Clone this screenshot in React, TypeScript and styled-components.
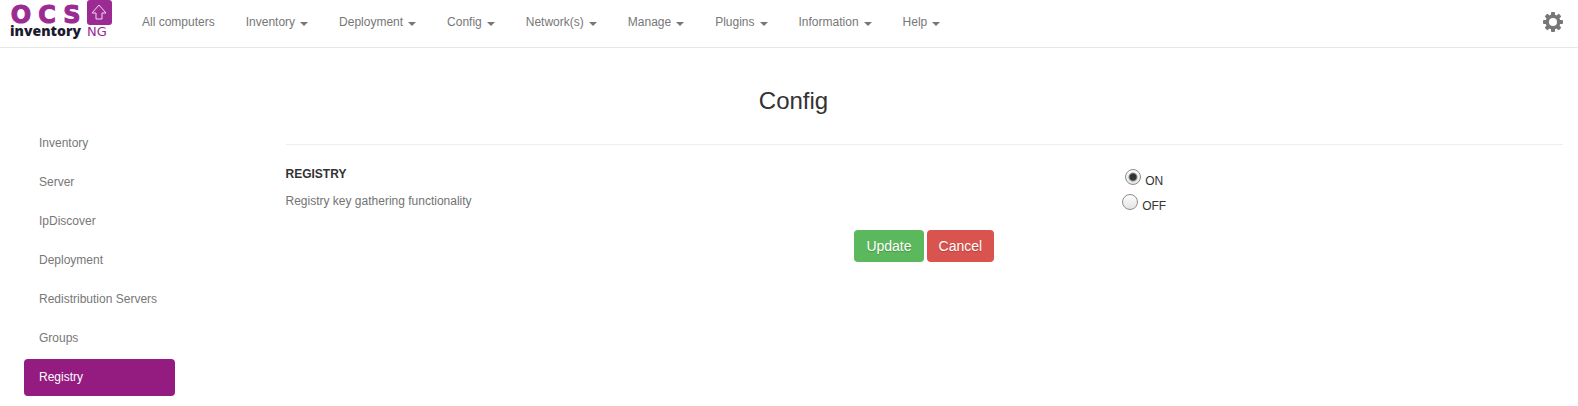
import React, { useState } from 'react';
import styled, { createGlobalStyle } from 'styled-components';

const GlobalStyle = createGlobalStyle`
  *, *::before, *::after { box-sizing: border-box; }
  body {
    margin: 0;
    background: #fff;
    color: #333;
    font: 12px/17px "Liberation Sans", Arial, sans-serif;
  }
`;

const Navbar = styled.header`
  display: flex;
  align-items: flex-start;
  justify-content: space-between;
  height: 48px;
  padding: 0 15px 0 9px;
  border-bottom: 1px solid #e7e7e7;
`;

const NavStart = styled.div`
  display: flex;
`;

const Brand = styled.a`
  display: block;
  width: 118px;
  height: 40px;
`;

const NavList = styled.ul`
  display: flex;
  gap: 1px;
  margin: 0;
  padding: 0;
  list-style: none;
`;

const NavLink = styled.a`
  display: flex;
  align-items: center;
  gap: 5px;
  padding: 14px 15px;
  color: #777;
  text-decoration: none;
`;

const Caret = styled.span`
  border: 4px solid transparent;
  border-top-color: #777;
  border-bottom: 0;
  margin-top: 2px;
`;

const SettingsButton = styled.button`
  display: block;
  padding: 12px 0 0;
  border: 0;
  background: none;
  color: #777;
  cursor: pointer;

  svg { display: block; }
`;

const Page = styled.main`
  padding: 0 15px 0 24px;
`;

const Title = styled.h1`
  margin: 39px 0 0;
  font-size: 24px;
  font-weight: 400;
  line-height: 28px;
  text-align: center;
`;

const Columns = styled.div`
  display: grid;
  grid-template-columns: 1fr 5fr;
  margin: 10px -15px 0;

  > * { margin: 0 15px; }
`;

const SideMenu = styled.ul`
  display: flex;
  flex-direction: column;
  gap: 2px;
  width: 151px;
  margin: 0;
  padding: 0;
  list-style: none;
`;

const SideLink = styled.a<{ $active?: boolean }>`
  display: block;
  padding: 10px 15px;
  border-radius: 4px;
  background: ${p => (p.$active ? '#941b80' : 'transparent')};
  color: ${p => (p.$active ? '#fff' : '#777')};
  text-decoration: none;
`;

const Form = styled.form`
  padding-top: 19px;
`;

const Divider = styled.hr`
  margin: 0 0 21px;
  border: 0;
  border-top: 1px solid #eee;
`;

const Setting = styled.div`
  display: grid;
  grid-template-columns: 1fr 2fr;
  margin: 0 -15px;

  > * { margin: 0 15px; }
`;

const SettingName = styled.h2`
  margin: 0;
  font-size: 12px;
  line-height: 17px;
`;

const SettingHelp = styled.p`
  margin: 10px 0 0;
  color: #737373;
`;

const Options = styled.div`
  display: flex;
  flex-direction: column;
  align-items: center;
  gap: 1px;
  padding-top: 3px;
`;

const Option = styled.label`
  display: flex;
  align-items: flex-end;
  gap: 4px;
  height: 24px;
`;

const Radio = styled.input`
  appearance: none;
  width: 16px;
  height: 16px;
  margin: 0 0 8px 4px;
  border: 1px solid #8d8d8d;
  border-radius: 50%;
  background: linear-gradient(#fdfdfd, #e4e4e4);

  &:checked {
    background: radial-gradient(circle, #2e3436 0 3px, transparent 5px), linear-gradient(#fdfdfd, #e4e4e4);
  }
`;

const OptionText = styled.span`
  padding-bottom: 3px;
`;

const Actions = styled.div`
  display: flex;
  justify-content: center;
  gap: 3px;
  margin-top: 12px;
`;

const Button = styled.button<{ $color: string }>`
  padding: 6px 12px;
  border: 0;
  border-radius: 4px;
  background: ${p => p.$color};
  color: #fff;
  font: 14px/20px "Liberation Sans", Arial, sans-serif;
  text-shadow: 0 1px 1px rgba(0, 0, 0, 0.2);
  cursor: pointer;
`;

const Logo = () => (
  <svg width="104" height="40" viewBox="0 0 104 40" role="img" aria-label="OCS Inventory NG">
    <g
      fill="#9b2a93"
      stroke="#9b2a93"
      fontFamily="DejaVu Sans, sans-serif"
      fontWeight="700"
      fontSize="24"
      textAnchor="middle"
    >
      <text x="12" y="23">O</text>
      <text x="38" y="23">C</text>
      <text x="63" y="23">S</text>
    </g>
    <rect x="78" y="0" width="25" height="25" rx="3" fill="#9b2a93" />
    <path d="M90 5l7 8h-4v6h-6v-6h-4z" fill="none" stroke="#f4d9f2" strokeWidth="1" />
    <text x="1" y="36" fill="#1c1b2e" fontFamily="Open Sans, sans-serif" fontWeight="800" fontSize="14">inventory</text>
    <text x="78" y="36" fill="#9b2a93" fontFamily="DejaVu Sans, sans-serif" fontSize="13">NG</text>
  </svg>
);

const Gear = () => (
  <svg width="20" height="20" viewBox="0 0 20 20" aria-hidden="true">
    <g fill="currentColor">
      {[0, 45, 90, 135].map(angle => (
        <rect key={angle} x="8" y="0" width="4" height="20" rx="1" transform={`rotate(${angle} 10 10)`} />
      ))}
      <circle cx="10" cy="10" r="7.5" />
    </g>
    <circle cx="10" cy="10" r="4" fill="#fff" />
  </svg>
);

const menus = ['Inventory', 'Deployment', 'Config', 'Network(s)', 'Manage', 'Plugins', 'Information', 'Help'];
const sections = ['Inventory', 'Server', 'IpDiscover', 'Deployment', 'Redistribution Servers', 'Groups', 'Registry'];

export default function App() {
  const [registry, setRegistry] = useState('ON');

  return (
    <>
      <GlobalStyle />
      <Navbar>
        <NavStart>
          <Brand href="#"><Logo /></Brand>
          <nav>
            <NavList>
              <li><NavLink href="#">All computers</NavLink></li>
              {menus.map(name => (
                <li key={name}><NavLink href="#">{name}<Caret /></NavLink></li>
              ))}
            </NavList>
          </nav>
        </NavStart>
        <SettingsButton type="button" aria-label="Settings"><Gear /></SettingsButton>
      </Navbar>
      <Page>
        <Title>Config</Title>
        <Columns>
          <nav>
            <SideMenu>
              {sections.map(name => (
                <li key={name}><SideLink href="#" $active={name === 'Registry'}>{name}</SideLink></li>
              ))}
            </SideMenu>
          </nav>
          <Form onSubmit={event => event.preventDefault()}>
            <Divider />
            <Setting>
              <div>
                <SettingName>REGISTRY</SettingName>
                <SettingHelp>Registry key gathering functionality</SettingHelp>
              </div>
              <Options role="radiogroup" aria-label="REGISTRY">
                {['ON', 'OFF'].map(value => (
                  <Option key={value}>
                    <Radio
                      type="radio"
                      name="registry"
                      value={value}
                      checked={registry === value}
                      onChange={() => setRegistry(value)}
                    />
                    <OptionText>{value}</OptionText>
                  </Option>
                ))}
              </Options>
            </Setting>
            <Actions>
              <Button type="submit" $color="#5cb85c">Update</Button>
              <Button type="button" $color="#d9534f">Cancel</Button>
            </Actions>
          </Form>
        </Columns>
      </Page>
    </>
  );
}
